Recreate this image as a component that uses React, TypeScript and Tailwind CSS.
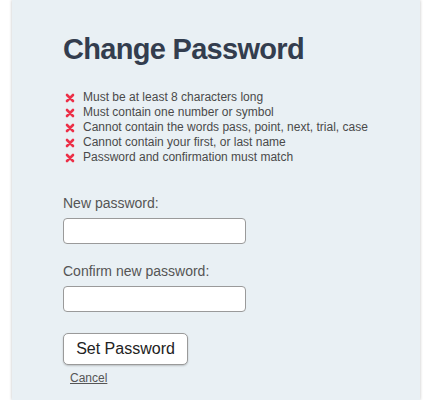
const rules = [
  'Must be at least 8 characters long',
  'Must contain one number or symbol',
  'Cannot contain the words pass, point, next, trial, case',
  'Cannot contain your first, or last name',
  'Password and confirmation must match',
];

function CrossIcon() {
  return (
    <svg width="10" height="10" viewBox="0 0 10 10" className="shrink-0">
      <path d="M2 2 L8 8 M8 2 L2 8" stroke="#ec3048" strokeWidth="2.6" strokeLinecap="round" />
    </svg>
  );
}

export default function App() {
  return (
    <div className="min-h-screen bg-white font-['Liberation_Sans',Arial,sans-serif]">
      <div className="mx-[12px] min-h-screen w-[408px] bg-[#e9f0f4] pl-[51px] pt-[35px] shadow-[0_0_3px_rgba(0,0,0,0.25)]">
        <h1 className="text-[29px] leading-[29px] font-bold tracking-[-0.7px] text-[#333d4e]">Change Password</h1>

        <ul className="mt-[26px] text-[12px] leading-[15px] text-[#4a4a4a]">
          {rules.map((r) => (
            <li key={r} className="flex items-center gap-[8px] pl-[2px]">
              <CrossIcon />
              <span>{r}</span>
            </li>
          ))}
        </ul>

        <form className="flex flex-col items-start" onSubmit={(e) => e.preventDefault()}>
          <label className="mt-[30px] text-[14px] leading-[16px] text-[#555]">New password:</label>
          <input
            type="password"
            className="mt-[7px] h-[26px] w-[183px] rounded-[4px] border border-[#9a9a9a] bg-white"
          />

          <label className="mt-[19px] text-[14px] leading-[16px] text-[#555]">Confirm new password:</label>
          <input
            type="password"
            className="mt-[7px] h-[26px] w-[183px] rounded-[4px] border border-[#9a9a9a] bg-white"
          />

          <button
            type="submit"
            className="mt-[21px] h-[32px] w-[125px] rounded-[5px] border border-[#9a9a9a] bg-white text-[16px] text-[#222] shadow-[0_1px_2px_rgba(0,0,0,0.2)]"
          >
            Set Password
          </button>

          <a href="#" className="ml-[7px] mt-[6px] text-[12px] leading-[14px] text-[#555] underline">
            Cancel
          </a>
        </form>
      </div>
    </div>
  );
}
